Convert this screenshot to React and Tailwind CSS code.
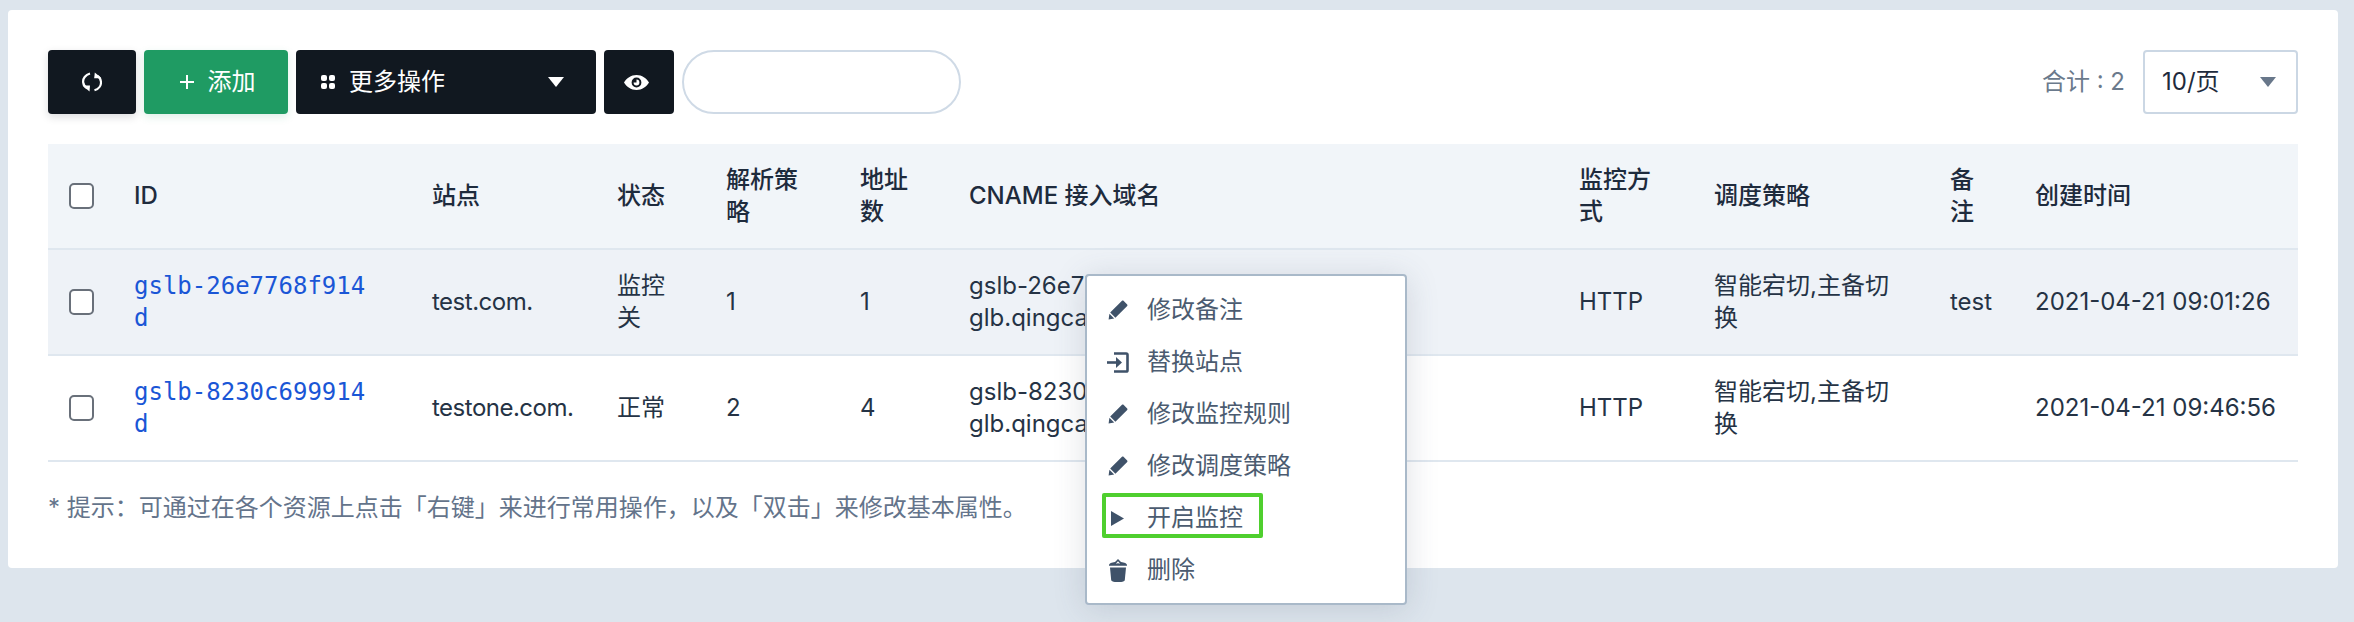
import React from 'react';

const FONT = 'font-["Inter","Noto_Sans_CJK_SC",sans-serif]';

const rows = [
  { id: 'gslb-26e7768f914d', site: 'test.com.', status: '监控关', policy: '1', count: '1', cname: 'gslb-26e7768f914d.', note: 'test', time: '2021-04-21 09:01:26', bg: 'bg-[#eef2f7]' },
  { id: 'gslb-8230c699914d', site: 'testone.com.', status: '正常', policy: '2', count: '4', cname: 'gslb-8230c699914d.', note: '', time: '2021-04-21 09:46:56', bg: 'bg-white' },
];

const RefreshIcon = () => (
  <svg width="20" height="20" viewBox="0 0 20 20" fill="none" stroke="white" strokeWidth="2.200">
    <path d="M8 1.500C3.500 2.800 .6 6.500 1.200 10.500c.3 2.500 1.800 4.500 4 5.800" />
    <path d="M12.500 18.300c4.300-1.300 7-5 6.400-9-.3-2.300-1.700-4.200-3.800-5.500" />
    <path d="M.5 13.500H8L7.500 19.500z" fill="white" stroke="none" />
    <path d="M19.500 6.200H12.200L12.800 .5z" fill="white" stroke="none" />
  </svg>
);

const GridIcon = () => (
  <svg width="14" height="14" viewBox="0 0 14 14" fill="white">
    <rect x="0" y="0" width="6" height="6" rx="2" />
    <rect x="8" y="0" width="6" height="6" rx="2" />
    <rect x="0" y="8" width="6" height="6" rx="2" />
    <rect x="8" y="8" width="6" height="6" rx="2" />
  </svg>
);

const EyeIcon = () => (
  <svg width="25" height="15" viewBox="0 0 25 15">
    <path fillRule="evenodd" fill="white" d="M12.500 0C18 0 22.500 3.200 25 7.500 22.500 11.800 18 15 12.500 15S2.500 11.800 0 7.500C2.500 3.200 7 0 12.500 0zm0 2.600a4.900 4.900 0 1 0 0 9.800 4.900 4.900 0 0 0 0-9.800z" />
    <path fill="white" d="M12.500 4.600a2.900 2.900 0 1 1-2.900 2.900h2.900z" />
  </svg>
);

const PencilIcon = () => (
  <svg width="20" height="20" viewBox="0 0 20 20" fill="#3f5269">
    <path d="M14 .8c.5-.4 1.100-.4 1.500 0l3.700 3.700c.4.400.4 1 0 1.500L7.400 17.800 2.200 12.600z" />
    <path d="M1.400 13.800 6.200 18.600 .6 19.400z" />
  </svg>
);

const LoginIcon = () => (
  <svg width="22" height="21" viewBox="0 0 22 21" fill="none" stroke="#3f5269" strokeWidth="2.600">
    <path d="M7 1.500h12.200c.8 0 1.300.5 1.300 1.300v15.400c0 .8-.5 1.300-1.300 1.300H7" />
    <path d="M0 10.500h10" />
    <path d="M9 5 15 10.500 9 16z" fill="#3f5269" stroke="none" />
  </svg>
);

const PlayIcon = () => (
  <svg width="13" height="15" viewBox="0 0 13 15" fill="#3f5269">
    <path d="M0 0 13 7.500 0 15z" />
  </svg>
);

const TrashIcon = () => (
  <svg width="18" height="23" viewBox="0 0 18 23" fill="#3f5269">
    <path d="M1 8.500h16l-1.200 12.400c-.1 1-1.600 2.100-6.800 2.100s-6.700-1.100-6.800-2.100z" />
    <path fillRule="evenodd" d="M9 0l3 3c3.400.4 6 1.500 6 3v.8H0V6c0-1.500 2.600-2.600 6-3zm0 2.300L6.800 4.800 9 4.200l2.200.6z" />
  </svg>
);

const Caret = ({ color = 'white' }) => (
  <svg width="16" height="10" viewBox="0 0 16 10" fill={color}>
    <path d="M0 0h16L8 10z" />
  </svg>
);

const Check = () => (
  <input type="checkbox" className="block appearance-none w-[25px] h-[26px] rounded-[5px] border-2 border-[#69707a] bg-white" />
);

const menu = [
  { label: '修改备注', icon: <PencilIcon /> },
  { label: '替换站点', icon: <LoginIcon /> },
  { label: '修改监控规则', icon: <PencilIcon /> },
  { label: '修改调度策略', icon: <PencilIcon /> },
  { label: '开启监控', icon: <PlayIcon /> },
  { label: '删除', icon: <TrashIcon /> },
];

const ContextMenu = () => (
  <div className="absolute left-[1077px] top-[264px] w-[322px] pt-[8px] pb-[7px] bg-white border-2 border-[#a9b9c9] rounded-[4px] shadow-[0_4px_32px_rgba(71,85,105,0.18)]">
    {menu.map((m) => (
      <div key={m.label} className="flex items-center h-[52px] text-[24px] text-[#4b5b70]">
        <span className="flex justify-center w-[59px] ml-[1px]">{m.icon}</span>
        <span>{m.label}</span>
      </div>
    ))}
    {/* green highlight from the screenshot */}
    <div className="absolute left-[15px] top-[217px] w-[161px] h-[45px] border-[4px] border-[#4fcf2e] rounded-[2px]" />
  </div>
);

export default function App() {
  return (
    <div className={`${FONT} h-[622px] overflow-hidden bg-[#dde5ed] pt-[10px] pl-[8px] pr-[16px]`}>
      <div className="relative h-[558px] bg-white rounded-[4px] px-[40px] pt-[40px]">
        <div className="flex items-center justify-between h-[64px]">
          <div className="flex gap-[8px]">
            <button className="flex items-center justify-center w-[88px] h-[64px] rounded-[4px] bg-[#111820] shadow-[0_3px_8px_rgba(17,24,32,0.15)]">
              <RefreshIcon />
            </button>
            <button className="flex items-center justify-center gap-[14px] w-[144px] pl-[3px] h-[64px] rounded-[4px] bg-[#1f9b63] text-white text-[24px] shadow-[0_3px_8px_rgba(31,155,99,0.15)]">
              <span className="relative w-[14px] h-[14px]">
                <span className="absolute left-0 top-[6px] w-[14px] h-[2px] bg-white" />
                <span className="absolute left-[6px] top-0 w-[2px] h-[14px] bg-white" />
              </span>
              添加
            </button>
            <button className="flex items-center w-[300px] h-[64px] pl-[25px] pr-[32px] rounded-[4px] bg-[#111820] text-white text-[24px]">
              <GridIcon />
              <span className="ml-[14px]">更多操作</span>
              <span className="ml-auto"><Caret /></span>
            </button>
            <button className="flex items-center justify-center w-[70px] h-[64px] pr-[5px] rounded-[4px] bg-[#111820]">
              <EyeIcon />
            </button>
            <input className="w-[279px] h-[64px] rounded-full border-2 border-[#cfdae6] bg-white" />
          </div>
          <div className="flex items-center gap-[18px]">
            <span className="text-[24px] text-[#6b7a8c]">合计 : 2</span>
            <div className="flex items-center justify-between w-[155px] h-[64px] pl-[17px] pr-[20px] border-2 border-[#cbd7e4] rounded-[4px] text-[24px] text-[#1e2b3d]">
              10/页
              <Caret color="#68778a" />
            </div>
          </div>
        </div>

        <table className="mt-[30px] w-full table-fixed border-separate border-spacing-0 text-[24px] leading-[32px] text-[#253345]">
          <colgroup>
            <col className="w-[86px]" />
            <col className="w-[298px]" />
            <col className="w-[185px]" />
            <col className="w-[109px]" />
            <col className="w-[134px]" />
            <col className="w-[109px]" />
            <col className="w-[610px]" />
            <col className="w-[135px]" />
            <col className="w-[236px]" />
            <col className="w-[85px]" />
            <col className="w-[263px]" />
          </colgroup>
          <thead>
            <tr className="h-[106px] bg-[#f1f5f9] text-left text-[#1e2b3d] [&>th]:border-b-2 [&>th]:border-[#dfe7ef] [&>th]:font-medium">
              <th className="pl-[21px]"><Check /></th>
              <th>ID</th>
              <th>站点</th>
              <th className="pr-[40px]">状态</th>
              <th className="pr-[40px]">解析策略</th>
              <th className="pr-[40px]">地址数</th>
              <th>CNAME 接入域名</th>
              <th className="pr-[40px]">监控方式</th>
              <th>调度策略</th>
              <th className="pr-[40px]">备注</th>
              <th>创建时间</th>
            </tr>
          </thead>
          <tbody>
            {rows.map((r) => (
              <tr key={r.id} className={`h-[106px] [&>td]:border-b-2 [&>td]:border-[#dfe7ef] ${r.bg}`}>
                <td className="pl-[21px]"><Check /></td>
                <td className="pr-[60px] break-all font-['DejaVu_Sans_Mono',monospace] text-[#1a56d6]">{r.id}</td>
                <td className="tracking-[-0.5px]">{r.site}</td>
                <td className="pr-[40px]">{r.status}</td>
                <td>{r.policy}</td>
                <td>{r.count}</td>
                <td>
                  <div>{r.cname}</div>
                  <div>glb.qingcache.com.</div>
                </td>
                <td>HTTP</td>
                <td className="pr-[40px]">智能宕切,主备切换</td>
                <td>{r.note}</td>
                <td>{r.time}</td>
              </tr>
            ))}
          </tbody>
        </table>

        <p className="mt-[30px] text-[24px] leading-[32px] text-[#64748b]">* 提示：可通过在各个资源上点击「右键」来进行常用操作，以及「双击」来修改基本属性。</p>

        <ContextMenu />
      </div>
    </div>
  );
}
